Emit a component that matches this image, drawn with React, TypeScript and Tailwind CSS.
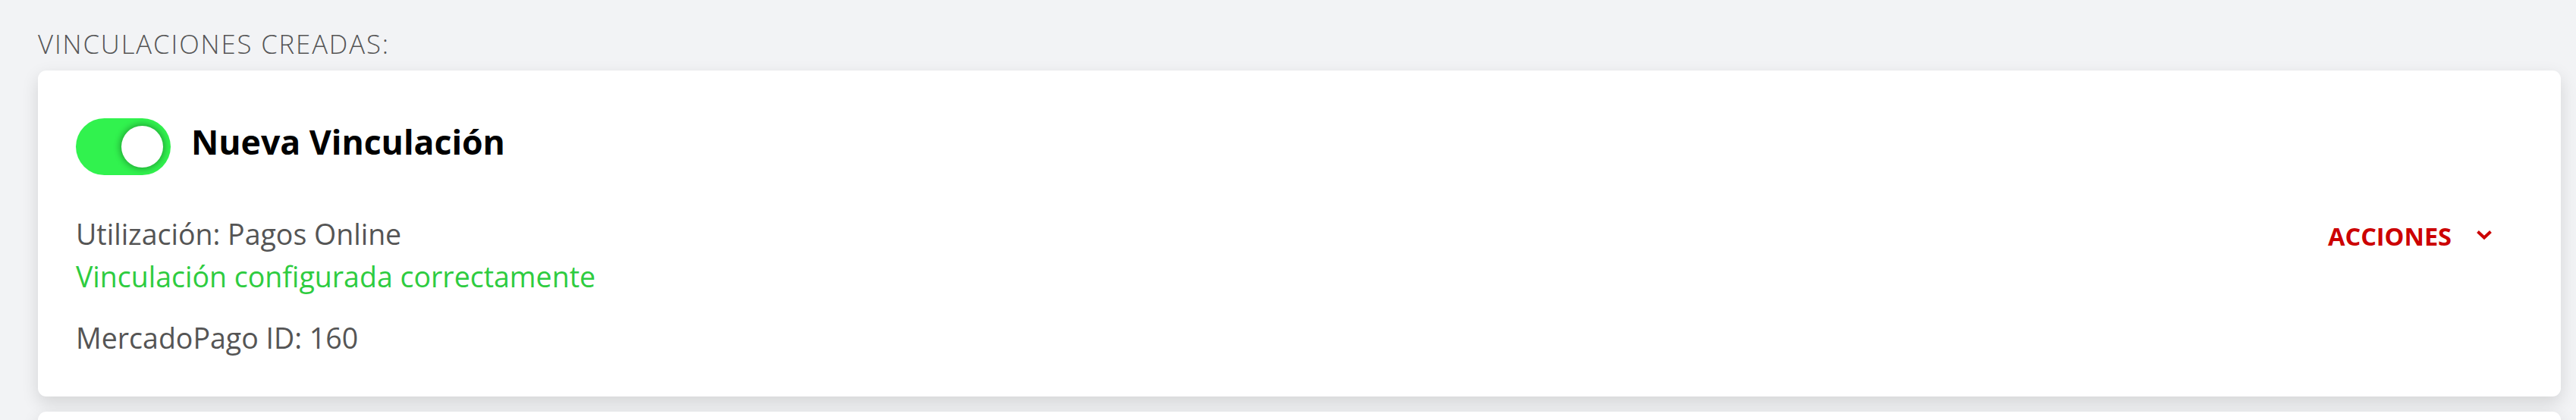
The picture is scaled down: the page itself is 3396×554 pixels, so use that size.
import { useState } from "react";

function Toggle({ on, onChange }: { on: boolean; onChange: () => void }) {
  return (
    <button
      type="button"
      onClick={onChange}
      className={`flex h-[75px] w-[125px] shrink-0 items-center rounded-full px-[10px] ${
        on ? "justify-end bg-[#31f24e]" : "justify-start bg-[#d1d5db]"
      }`}
    >
      <span className="block h-[55px] w-[55px] rounded-full bg-white shadow-[0_0_8px_2px_rgba(0,0,0,0.32)]" />
    </button>
  );
}

function Chevron() {
  return (
    <svg width="22" height="14" viewBox="0 0 22 14" fill="none" className="mt-[-4px]">
      <path d="M2.5 2.5 L11 10.5 L19.5 2.5" stroke="#cc0000" strokeWidth="4" />
    </svg>
  );
}

function VinculacionCard() {
  const [active, setActive] = useState(true);

  return (
    <div className="rounded-[11px] bg-white pb-[49px] pl-[50px] pr-[50px] pt-[63px] shadow-[0_8px_22px_rgba(0,0,0,0.13)]">
      <div className="flex items-start gap-[27px]">
        <Toggle on={active} onChange={() => setActive(!active)} />
        <h2 className="mt-px text-[44.6px] font-bold leading-[59px] text-black">
          Nueva Vinculación
        </h2>
      </div>
      <div className="mt-[50px] flex items-start justify-between">
        <div className="text-[37.5px] leading-[56px] text-[#555555]">
          <p>Utilización: Pagos Online</p>
          <p className="text-[#2ecc40]">Vinculación configurada correctamente</p>
          <p className="mt-[25px]">MercadoPago ID: 160</p>
        </div>
        <button
          type="button"
          className="mr-[40px] mt-[3px] flex items-center gap-[32px] text-[32.5px] font-bold leading-[56px] text-[#cc0000]"
        >
          ACCIONES
          <Chevron />
        </button>
      </div>
    </div>
  );
}

export default function App() {
  return (
    <div
      className="h-screen overflow-hidden bg-[#f2f3f5] pl-[50px] pr-[20px] pt-[34px]"
      style={{ fontFamily: '"Open Sans", "Liberation Sans", sans-serif' }}
    >
      <h1 className="mb-[11px] text-[34.66px] font-light uppercase leading-[48px] tracking-[0.055em] text-[#555555]">
        Vinculaciones creadas:
      </h1>
      <div className="flex flex-col gap-[20px]">
        <VinculacionCard />
        <div className="h-[430px] rounded-[11px] bg-white shadow-[0_8px_22px_rgba(0,0,0,0.13)]" />
      </div>
    </div>
  );
}
